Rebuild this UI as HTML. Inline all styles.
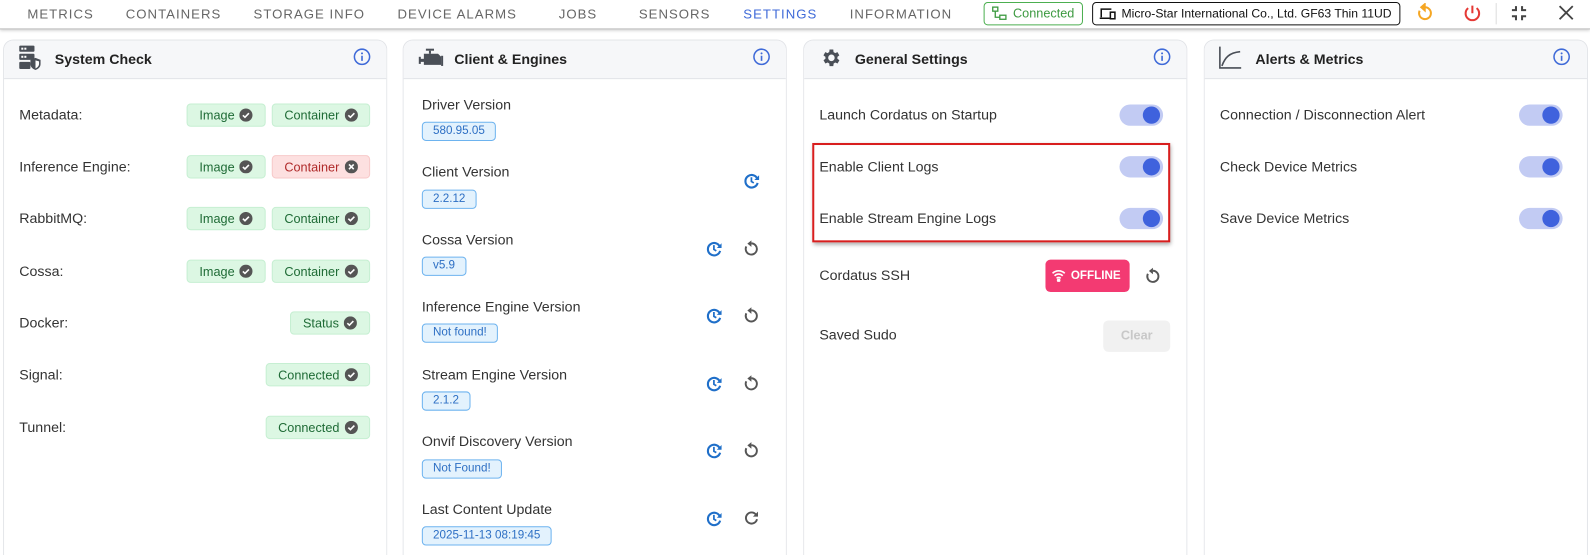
<!DOCTYPE html>
<html style="width:1590px;height:555px;overflow:hidden"><head><meta charset="utf-8">
<style>
*{box-sizing:border-box;margin:0;padding:0}
body{width:1590px;height:555px;overflow:hidden;background:#fff;font-family:"Liberation Sans",sans-serif;color:#222;position:relative}
#w{position:absolute;left:0;top:-1px;width:1568px;height:549px;transform:scale(1.01403);transform-origin:0 0;overflow:hidden}
.a{position:absolute}
.tab{position:absolute;top:7px;font-size:13px;letter-spacing:1px;color:#666}
.card{position:absolute;top:40px;width:379px;height:515px;border:1px solid #e2e4e8;border-bottom:none;border-radius:10px 10px 0 0;background:#fff;overflow:hidden}
.hd{height:38px;background:#f6f7f9;border-bottom:1px solid #e2e4e8;position:relative}
.hd .t{position:absolute;left:50px;top:10px;font-weight:bold;font-size:14px;color:#222}
.lbl{position:absolute;font-size:14px;color:#333;white-space:nowrap}
.bg{position:absolute;height:23px;border-radius:4px;font-size:12.5px;display:flex;align-items:center;justify-content:center;gap:5px}
.ok{background:#dcf7e3;border:1px solid #c6efd2;color:#1f6b36}
.er{background:#fde0e0;border:1px solid #f7c9c9;color:#b02a2a}
.chip{position:absolute;left:416px;height:19px;padding:0 10px;border:1px solid #6db3ef;background:#e3f2fd;color:#2d6fc4;border-radius:4px;font-size:11.5px;line-height:17px}
.tg{position:absolute;width:43px;height:21px;border-radius:11px;background:#c2cbf3}
.tg::after{content:"";position:absolute;right:3px;top:2px;width:17px;height:17px;border-radius:50%;background:#3f62dd}
</style></head><body><div id="w">
<div class="a" style="left:0;top:0;width:1568px;height:30px;border-bottom:1px solid #bbb;box-shadow:0 1px 3px rgba(0,0,0,.2)"></div>
<div class="tab" style="left:27px">METRICS</div>
<div class="tab" style="left:124px">CONTAINERS</div>
<div class="tab" style="left:250px">STORAGE INFO</div>
<div class="tab" style="left:392px">DEVICE ALARMS</div>
<div class="tab" style="left:551px">JOBS</div>
<div class="tab" style="left:630px">SENSORS</div>
<div class="tab" style="left:733px;color:#3f6ad8">SETTINGS</div>
<div class="tab" style="left:838px">INFORMATION</div>
<div class="a" style="left:970px;top:3px;width:98px;height:23px;border:1px solid #4caf50;border-radius:4px;color:#3d9a41;font-size:12.5px;line-height:21px;padding-left:28px;white-space:nowrap">Connected
<svg class="a" style="left:7px;top:3px" width="15" height="15" viewBox="0 0 15 15" fill="none" stroke="#3d9a41" stroke-width="1.3"><rect x="1" y="1" width="5" height="4"/><rect x="8" y="9" width="6" height="4"/><path d="M3.5 5v6h4.5"/></svg></div>
<div class="a" style="left:1077px;top:3px;width:304px;height:23px;border:1px solid #111;border-radius:4px;font-size:12px;line-height:21px;padding-left:28px;color:#111;white-space:nowrap;overflow:hidden">Micro-Star International Co., Ltd. GF63 Thin 11UD
<svg class="a" style="left:6px;top:4px" width="17" height="13" viewBox="0 0 17 13" fill="none" stroke="#111" stroke-width="1.5"><path d="M2 10V2h10M0.5 11h10"/><rect x="11" y="5" width="4.5" height="6.5"/></svg></div>
<svg class="a" style="left:1395px;top:4px" width="20" height="20" viewBox="0 0 24 24" fill="none" stroke="#f5a623" stroke-width="2.4"><path d="M6 9a7 7 0 1 0 6-4"/><path d="M12 1.5v7l-4-3.5z" fill="#f5a623"/></svg>
<svg class="a" style="left:1442px;top:4px" width="20" height="20" viewBox="0 0 24 24" fill="none" stroke="#e53935" stroke-width="2.4"><path d="M12 3v9"/><path d="M7 6a8 8 0 1 0 10 0"/></svg>
<div class="a" style="left:1475px;top:4px;width:1px;height:21px;background:#ddd"></div>
<svg class="a" style="left:1490px;top:6px" width="16" height="16" viewBox="0 0 16 16" fill="none" stroke="#444" stroke-width="2"><path d="M5 1v4H1M11 1v4h4M5 15v-4H1M11 15v-4h4"/></svg>
<svg class="a" style="left:1537px;top:6px" width="15" height="15" viewBox="0 0 15 15" stroke="#444" stroke-width="1.8"><path d="M1 1l13 13M14 1L1 14"/></svg>

<div class="card" style="left:3px"><div class="hd"><div class="t">System Check</div></div></div>
<div class="card" style="left:397px"><div class="hd"><div class="t">Client &amp; Engines</div></div></div>
<div class="card" style="left:792px"><div class="hd"><div class="t">General Settings</div></div></div>
<div class="card" style="left:1187px"><div class="hd"><div class="t">Alerts &amp; Metrics</div></div></div>
<svg class="a" style="left:348px;top:48px" width="18" height="18" viewBox="0 0 18 18"><circle cx="9" cy="9" r="7.5" fill="none" stroke="#3f6ad8" stroke-width="1.5"/><circle cx="9" cy="5.6" r="1" fill="#3f6ad8"/><path d="M9 8v5" stroke="#3f6ad8" stroke-width="1.6"/></svg>
<svg class="a" style="left:742px;top:48px" width="18" height="18" viewBox="0 0 18 18"><circle cx="9" cy="9" r="7.5" fill="none" stroke="#3f6ad8" stroke-width="1.5"/><circle cx="9" cy="5.6" r="1" fill="#3f6ad8"/><path d="M9 8v5" stroke="#3f6ad8" stroke-width="1.6"/></svg>
<svg class="a" style="left:1137px;top:48px" width="18" height="18" viewBox="0 0 18 18"><circle cx="9" cy="9" r="7.5" fill="none" stroke="#3f6ad8" stroke-width="1.5"/><circle cx="9" cy="5.6" r="1" fill="#3f6ad8"/><path d="M9 8v5" stroke="#3f6ad8" stroke-width="1.6"/></svg>
<svg class="a" style="left:1531px;top:48px" width="18" height="18" viewBox="0 0 18 18"><circle cx="9" cy="9" r="7.5" fill="none" stroke="#3f6ad8" stroke-width="1.5"/><circle cx="9" cy="5.6" r="1" fill="#3f6ad8"/><path d="M9 8v5" stroke="#3f6ad8" stroke-width="1.6"/></svg>
<svg class="a" style="left:18px;top:45px" width="24" height="26" viewBox="0 0 24 26" fill="#4a4f57"><rect x="1" y="1" width="15" height="6" rx="1"/><rect x="1" y="9" width="15" height="6" rx="1"/><rect x="1" y="17" width="11" height="7" rx="1"/><path d="M17 13l5 2v4c0 3-2 5-5 6-3-1-5-3-5-6v-4z"/><rect x="3" y="3" width="2" height="2" fill="#fff"/><rect x="6" y="3" width="2" height="2" fill="#fff"/><rect x="3" y="11" width="2" height="2" fill="#fff"/><rect x="6" y="11" width="2" height="2" fill="#fff"/><path d="M17 15.5v8c2-1 3.5-2.5 3.5-4.5v-2.5z" fill="#fff"/></svg>
<svg class="a" style="left:412px;top:48px" width="26" height="20" viewBox="0 0 26 20" fill="#4a4f57"><rect x="8" y="1" width="8" height="2"/><rect x="11" y="3" width="2" height="3"/><path d="M6 6h14l3 3v8H6z"/><rect x="1" y="9" width="2" height="7"/><rect x="2" y="11" width="5" height="3"/><rect x="23" y="8" width="2" height="10"/></svg>
<svg class="a" style="left:808px;top:47px" width="22" height="22" viewBox="0 0 24 24" fill="#4a4f57"><path d="M19.4 13a7.5 7.5 0 0 0 0-2l2.1-1.6-2-3.5-2.5 1a7.6 7.6 0 0 0-1.7-1L15 3h-4l-.4 2.9a7.6 7.6 0 0 0-1.7 1l-2.5-1-2 3.5L6.6 11a7.5 7.5 0 0 0 0 2l-2.1 1.6 2 3.5 2.5-1a7.6 7.6 0 0 0 1.7 1L11 21h4l.4-2.9a7.6 7.6 0 0 0 1.7-1l2.5 1 2-3.5zM13 15.5a3.5 3.5 0 1 1 0-7 3.5 3.5 0 0 1 0 7z"/></svg>
<svg class="a" style="left:1201px;top:46px" width="24" height="24" viewBox="0 0 24 24" fill="none" stroke="#4a4f57" stroke-width="1.6"><path d="M2 1v21h21"/><path d="M4 20c3-8 7-13 18-14"/></svg>

<div class="lbl" style="left:19px;top:106px">Metadata:</div>
<div class="lbl" style="left:19px;top:157px">Inference Engine:</div>
<div class="lbl" style="left:19px;top:208px">RabbitMQ:</div>
<div class="lbl" style="left:19px;top:260px">Cossa:</div>
<div class="lbl" style="left:19px;top:311px">Docker:</div>
<div class="lbl" style="left:19px;top:362px">Signal:</div>
<div class="lbl" style="left:19px;top:414px">Tunnel:</div>

<div class="bg ok" style="left:184px;top:103px;width:78px">Image <svg width="13" height="13" viewBox="0 0 14 14"><circle cx="7" cy="7" r="7" fill="#555"/><path d="M3.8 7.2l2.2 2.1 4.2-4.3" stroke="#fff" stroke-width="1.7" fill="none"/></svg></div>
<div class="bg ok" style="left:268px;top:103px;width:97px">Container <svg width="13" height="13" viewBox="0 0 14 14"><circle cx="7" cy="7" r="7" fill="#555"/><path d="M3.8 7.2l2.2 2.1 4.2-4.3" stroke="#fff" stroke-width="1.7" fill="none"/></svg></div>
<div class="bg ok" style="left:184px;top:154px;width:78px">Image <svg width="13" height="13" viewBox="0 0 14 14"><circle cx="7" cy="7" r="7" fill="#555"/><path d="M3.8 7.2l2.2 2.1 4.2-4.3" stroke="#fff" stroke-width="1.7" fill="none"/></svg></div>
<div class="bg er" style="left:268px;top:154px;width:97px">Container <svg width="13" height="13" viewBox="0 0 14 14"><circle cx="7" cy="7" r="7" fill="#555"/><path d="M4.5 4.5l5 5M9.5 4.5l-5 5" stroke="#fff" stroke-width="1.7"/></svg></div>
<div class="bg ok" style="left:184px;top:205px;width:78px">Image <svg width="13" height="13" viewBox="0 0 14 14"><circle cx="7" cy="7" r="7" fill="#555"/><path d="M3.8 7.2l2.2 2.1 4.2-4.3" stroke="#fff" stroke-width="1.7" fill="none"/></svg></div>
<div class="bg ok" style="left:268px;top:205px;width:97px">Container <svg width="13" height="13" viewBox="0 0 14 14"><circle cx="7" cy="7" r="7" fill="#555"/><path d="M3.8 7.2l2.2 2.1 4.2-4.3" stroke="#fff" stroke-width="1.7" fill="none"/></svg></div>
<div class="bg ok" style="left:184px;top:257px;width:78px">Image <svg width="13" height="13" viewBox="0 0 14 14"><circle cx="7" cy="7" r="7" fill="#555"/><path d="M3.8 7.2l2.2 2.1 4.2-4.3" stroke="#fff" stroke-width="1.7" fill="none"/></svg></div>
<div class="bg ok" style="left:268px;top:257px;width:97px">Container <svg width="13" height="13" viewBox="0 0 14 14"><circle cx="7" cy="7" r="7" fill="#555"/><path d="M3.8 7.2l2.2 2.1 4.2-4.3" stroke="#fff" stroke-width="1.7" fill="none"/></svg></div>
<div class="bg ok" style="left:286px;top:308px;width:79px">Status <svg width="13" height="13" viewBox="0 0 14 14"><circle cx="7" cy="7" r="7" fill="#555"/><path d="M3.8 7.2l2.2 2.1 4.2-4.3" stroke="#fff" stroke-width="1.7" fill="none"/></svg></div>
<div class="bg ok" style="left:262px;top:359px;width:103px">Connected <svg width="13" height="13" viewBox="0 0 14 14"><circle cx="7" cy="7" r="7" fill="#555"/><path d="M3.8 7.2l2.2 2.1 4.2-4.3" stroke="#fff" stroke-width="1.7" fill="none"/></svg></div>
<div class="bg ok" style="left:262px;top:411px;width:103px">Connected <svg width="13" height="13" viewBox="0 0 14 14"><circle cx="7" cy="7" r="7" fill="#555"/><path d="M3.8 7.2l2.2 2.1 4.2-4.3" stroke="#fff" stroke-width="1.7" fill="none"/></svg></div>

<div class="lbl" style="left:416px;top:96px">Driver Version</div><div class="chip" style="top:121px">580.95.05</div>
<div class="lbl" style="left:416px;top:162px">Client Version</div><div class="chip" style="top:188px">2.2.12</div>
<div class="lbl" style="left:416px;top:229px">Cossa Version</div><div class="chip" style="top:254px">v5.9</div>
<div class="lbl" style="left:416px;top:295px">Inference Engine Version</div><div class="chip" style="top:320px">Not found!</div>
<div class="lbl" style="left:416px;top:362px">Stream Engine Version</div><div class="chip" style="top:387px">2.1.2</div>
<div class="lbl" style="left:416px;top:428px">Onvif Discovery Version</div><div class="chip" style="top:454px">Not Found!</div>
<div class="lbl" style="left:416px;top:495px">Last Content Update</div><div class="chip" style="top:520px">2025-11-13 08:19:45</div>

<svg class="a" style="left:733px;top:171px" width="17" height="17" viewBox="0 0 18 18" fill="none" stroke="#1f6fc9" stroke-width="2.2"><path d="M15 7.5A6.5 6.5 0 1 0 15 11"/><path d="M8.5 5v4.5l2.5 1.5" stroke-width="1.8"/><path d="M16.5 3v5h-5z" fill="#1f6fc9" stroke="none"/></svg>
<svg class="a" style="left:696px;top:238px" width="17" height="17" viewBox="0 0 18 18" fill="none" stroke="#1f6fc9" stroke-width="2.2"><path d="M15 7.5A6.5 6.5 0 1 0 15 11"/><path d="M8.5 5v4.5l2.5 1.5" stroke-width="1.8"/><path d="M16.5 3v5h-5z" fill="#1f6fc9" stroke="none"/></svg>
<svg class="a" style="left:696px;top:304px" width="17" height="17" viewBox="0 0 18 18" fill="none" stroke="#1f6fc9" stroke-width="2.2"><path d="M15 7.5A6.5 6.5 0 1 0 15 11"/><path d="M8.5 5v4.5l2.5 1.5" stroke-width="1.8"/><path d="M16.5 3v5h-5z" fill="#1f6fc9" stroke="none"/></svg>
<svg class="a" style="left:696px;top:371px" width="17" height="17" viewBox="0 0 18 18" fill="none" stroke="#1f6fc9" stroke-width="2.2"><path d="M15 7.5A6.5 6.5 0 1 0 15 11"/><path d="M8.5 5v4.5l2.5 1.5" stroke-width="1.8"/><path d="M16.5 3v5h-5z" fill="#1f6fc9" stroke="none"/></svg>
<svg class="a" style="left:696px;top:437px" width="17" height="17" viewBox="0 0 18 18" fill="none" stroke="#1f6fc9" stroke-width="2.2"><path d="M15 7.5A6.5 6.5 0 1 0 15 11"/><path d="M8.5 5v4.5l2.5 1.5" stroke-width="1.8"/><path d="M16.5 3v5h-5z" fill="#1f6fc9" stroke="none"/></svg>
<svg class="a" style="left:696px;top:504px" width="17" height="17" viewBox="0 0 18 18" fill="none" stroke="#1f6fc9" stroke-width="2.2"><path d="M15 7.5A6.5 6.5 0 1 0 15 11"/><path d="M8.5 5v4.5l2.5 1.5" stroke-width="1.8"/><path d="M16.5 3v5h-5z" fill="#1f6fc9" stroke="none"/></svg>

<svg class="a" style="left:733px;top:303px" width="16" height="17" viewBox="0 0 16 17" fill="none" stroke="#555" stroke-width="1.9"><path d="M8 4A5.5 5.5 0 1 1 3 7"/><path d="M8 1v6.5l-4-3.25z" fill="#555" stroke="none"/></svg>
<svg class="a" style="left:733px;top:237px" width="16" height="17" viewBox="0 0 16 17" fill="none" stroke="#555" stroke-width="1.9"><path d="M8 4A5.5 5.5 0 1 1 3 7"/><path d="M8 1v6.5l-4-3.25z" fill="#555" stroke="none"/></svg>
<svg class="a" style="left:733px;top:370px" width="16" height="17" viewBox="0 0 16 17" fill="none" stroke="#555" stroke-width="1.9"><path d="M8 4A5.5 5.5 0 1 1 3 7"/><path d="M8 1v6.5l-4-3.25z" fill="#555" stroke="none"/></svg>
<svg class="a" style="left:733px;top:436px" width="16" height="17" viewBox="0 0 16 17" fill="none" stroke="#555" stroke-width="1.9"><path d="M8 4A5.5 5.5 0 1 1 3 7"/><path d="M8 1v6.5l-4-3.25z" fill="#555" stroke="none"/></svg>
<svg class="a" style="left:733px;top:503px" width="16" height="17" viewBox="0 0 16 17" fill="none" stroke="#555" stroke-width="1.9"><path d="M12.5 5.5A5.5 5.5 0 1 0 13.5 10"/><path d="M14.5 2.5v5h-5z" fill="#555" stroke="none"/></svg>

<div class="lbl" style="left:808px;top:106px">Launch Cordatus on Startup</div><div class="tg" style="left:1104px;top:104px"></div>
<div class="a" style="left:801px;top:142px;width:353px;height:98px;border:2px solid #d81e1e;box-shadow:1px 2px 4px rgba(0,0,0,.35)"></div>
<div class="lbl" style="left:808px;top:157px">Enable Client Logs</div><div class="tg" style="left:1104px;top:155px"></div>
<div class="lbl" style="left:808px;top:208px">Enable Stream Engine Logs</div><div class="tg" style="left:1104px;top:206px"></div>
<div class="lbl" style="left:808px;top:264px">Cordatus SSH</div>
<div class="a" style="left:1031px;top:257px;width:83px;height:32px;background:#f33a72;border-radius:5px;color:#fff;font-weight:bold;font-size:11.5px;line-height:32px;padding-left:25px">OFFLINE
<svg class="a" style="left:6px;top:9px" width="14" height="13" viewBox="0 0 14 13" fill="none" stroke="#fff" stroke-width="1.6"><path d="M1 4.5a8.5 8.5 0 0 1 12 0M3 7a5.5 5.5 0 0 1 8 0M5 9.5a2.6 2.6 0 0 1 4 0"/><circle cx="7" cy="11.5" r="1" fill="#fff"/></svg></div>
<svg class="a" style="left:1129px;top:264px" width="16" height="17" viewBox="0 0 16 17" fill="none" stroke="#555" stroke-width="1.9"><path d="M8 4A5.5 5.5 0 1 1 3 7"/><path d="M8 1v6.5l-4-3.25z" fill="#555" stroke="none"/></svg>
<div class="lbl" style="left:808px;top:323px">Saved Sudo</div>
<div class="a" style="left:1088px;top:317px;width:66px;height:31px;background:#f1f1f1;border-radius:5px;color:#c8c8c8;font-weight:bold;font-size:12.5px;line-height:31px;text-align:center">Clear</div>

<div class="lbl" style="left:1203px;top:106px">Connection / Disconnection Alert</div><div class="tg" style="left:1498px;top:104px"></div>
<div class="lbl" style="left:1203px;top:157px">Check Device Metrics</div><div class="tg" style="left:1498px;top:155px"></div>
<div class="lbl" style="left:1203px;top:208px">Save Device Metrics</div><div class="tg" style="left:1498px;top:206px"></div>
</div></body></html>
